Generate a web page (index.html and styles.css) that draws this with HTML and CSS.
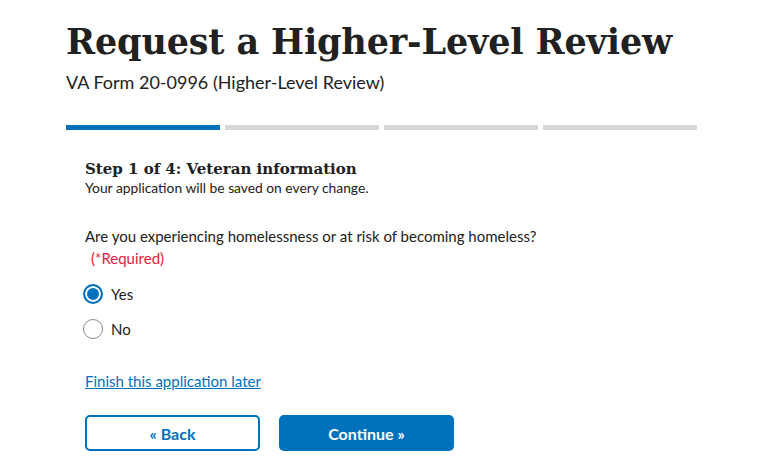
FILE: index.html
```html
<!DOCTYPE html>
<html lang="en">
<head>
<meta charset="utf-8">
<title>Request a Higher-Level Review</title>
<link rel="stylesheet" href="styles.css">
</head>
<body>
<main class="page">
  <header class="intro">
    <h1 class="title">Request a Higher-Level Review</h1>
    <p class="subtitle">VA Form 20-0996 (Higher-Level Review)</p>
  </header>
  <div class="progress">
    <span class="seg seg-active"></span>
    <span class="seg"></span>
    <span class="seg"></span>
    <span class="seg"></span>
  </div>
  <section class="form">
    <h2 class="step">Step 1 of 4: Veteran information</h2>
    <p class="saved">Your application will be saved on every change.</p>
    <fieldset class="question">
      <legend class="legend">Are you experiencing homelessness or at risk of becoming homeless?<span class="required">(*Required)</span></legend>
      <label class="option"><input class="radio" type="radio" name="homeless" checked><span>Yes</span></label>
      <label class="option"><input class="radio" type="radio" name="homeless"><span>No</span></label>
    </fieldset>
    <a class="later" href="#">Finish this application later</a>
    <div class="actions">
      <button class="btn btn-outline" type="button">« Back</button>
      <button class="btn btn-primary" type="button">Continue »</button>
    </div>
  </section>
</main>
</body>
</html>
```

FILE: styles.css
```css
* { box-sizing: border-box; }
html, body { margin: 0; padding: 0; background: #fff; }
body {
  font-family: "Lato", "Liberation Sans", sans-serif;
  color: #212121;
}
.page {
  padding: 22px 0 0 66px;
  width: 697px;
}
.title {
  font-family: "DejaVu Serif", serif;
  font-weight: bold;
  font-size: 35px;
  line-height: 40px;
  margin: 0;
  color: #212121;
  letter-spacing: -0.15px;
}
.subtitle {
  font-size: 18px;
  line-height: 24px;
  margin: 8px 0 0;
}
.progress {
  display: flex;
  gap: 5px;
  margin-top: 31px;
}
.seg {
  flex: 1;
  height: 5px;
  background: #d6d7d9;
}
.seg-active { background: #0071bb; }
.form {
  padding-left: 19px;
  margin-top: 29px;
}
.step {
  font-family: "DejaVu Serif", serif;
  font-weight: bold;
  font-size: 15px;
  line-height: 20px;
  margin: 0;
}
.saved {
  font-size: 13.8px;
  line-height: 18px;
  margin: 0;
}
.question {
  border: 0;
  padding: 0;
  margin: 28px 0 0;
}
.legend {
  padding: 0;
  font-size: 15px;
  line-height: 22px;
}
.required {
  display: block;
  color: #e31c3d;
  padding-left: 6px;
}
.option {
  display: flex;
  align-items: center;
  gap: 8px;
  font-size: 15px;
  height: 35px;
  margin-left: -2px;
}
.option:first-of-type { margin-top: 7px; }
.radio {
  appearance: none;
  -webkit-appearance: none;
  margin: 0;
  width: 20px;
  height: 20px;
  border-radius: 50%;
  border: 1px solid #8a8a8a;
  background: #fff;
}
.radio:checked {
  border: 2px solid #0071bb;
  background: #0071bb;
  box-shadow: inset 0 0 0 2px #fff;
}
.later {
  display: inline-block;
  margin-top: 26px;
  color: #0071bb;
  font-size: 15px;
  text-decoration: underline;
}
.actions {
  display: flex;
  gap: 19px;
  margin-top: 25px;
}
.btn {
  width: 175px;
  height: 36px;
  border-radius: 5px;
  font-family: "Lato", "Liberation Sans", sans-serif;
  font-weight: bold;
  font-size: 16px;
}
.btn-outline {
  background: #fff;
  color: #0071bb;
  border: 2px solid #0071bb;
}
.btn-primary {
  background: #0071bb;
  color: #fff;
  border: 0;
}
```
